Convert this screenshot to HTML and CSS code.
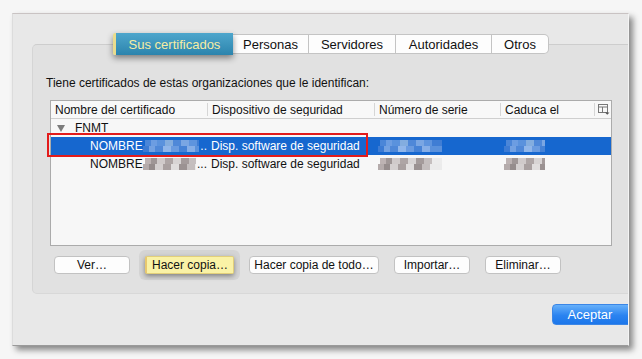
FILE: index.html
```html
<!DOCTYPE html>
<html lang="es">
<head>
<meta charset="utf-8">
<title>Administrador de certificados</title>
<link rel="stylesheet" href="styles.css">
</head>
<body>
<div class="window">
  <div class="tabs">
    <div class="tab active">Sus certificados</div>
    <div class="tab t-personas">Personas</div>
    <div class="tab t-servidores">Servidores</div>
    <div class="tab t-autoridades">Autoridades</div>
    <div class="tab t-otros last">Otros</div>
  </div>
  <div class="group">
    <p class="label">Tiene certificados de estas organizaciones que le identifican:</p>
    <div class="table">
      <div class="row head">
        <div class="cell c1">Nombre del certificado</div>
        <div class="cell sep">Dispositivo de seguridad</div>
        <div class="cell sep">Número de serie</div>
        <div class="cell sep">Caduca el</div>
        <div class="cell sep icon">
          <svg width="12" height="11" viewBox="0 0 12 11">
            <rect x="0.5" y="0.5" width="9" height="8" fill="none" stroke="#777" stroke-width="1"/>
            <line x1="0.5" y1="3" x2="9.5" y2="3" stroke="#777"/>
            <line x1="4.5" y1="3" x2="4.5" y2="8.5" stroke="#777"/>
            <path d="M7 8.5 L11.5 8.5 L9.25 10.8 Z" fill="#555"/>
          </svg>
        </div>
      </div>
      <div class="row org">
        <div class="cell c1"><span class="tri"></span>FNMT</div>
      </div>
      <div class="row cert selected">
        <div class="cell c1 name">NOMBRE<span class="blur b-name"></span>..</div>
        <div class="cell dev">Disp. software de seguridad</div>
        <div class="cell"><span class="blur b-serial"></span></div>
        <div class="cell"><span class="blur b-date"></span></div>
      </div>
      <div class="row cert">
        <div class="cell c1 name">NOMBRE<span class="blur b-name"></span>...</div>
        <div class="cell dev">Disp. software de seguridad</div>
        <div class="cell"><span class="blur b-serial"></span></div>
        <div class="cell"><span class="blur b-date"></span></div>
      </div>
      <div class="mark"></div>
    </div>
    <div class="buttons">
      <button class="btn w-ver">Ver…</button>
      <button class="btn hl w-copia">Hacer copia…</button>
      <button class="btn w-todo">Hacer copia de todo…</button>
      <button class="btn w-imp">Importar…</button>
      <button class="btn w-elim">Eliminar…</button>
    </div>
  </div>
  <div class="footer">
    <button class="ok">Aceptar</button>
  </div>
</div>
</body>
</html>
```
FILE: styles.css
```css
* { box-sizing: border-box; }
html, body { margin: 0; padding: 0; }
body {
  background: #f6f6f6;
  font-family: "Liberation Sans", Arial, Helvetica, sans-serif;
  width: 642px;
  height: 359px;
  overflow: hidden;
}
.window {
  margin: 13px 0 0 12px;
  width: 617px;
  height: 333px;
  background: #e8e8e8;
  border-top: 1px solid #c9c3c3;
  border-left: 1px solid #dcdcdc;
  border-right: 1px solid #f4f4f4;
  border-bottom: 1px solid #9a9a9a;
  box-shadow: 4px 4px 6px rgba(0,0,0,0.45);
  overflow: hidden;
  display: flex;
  flex-direction: column;
}
.tabs {
  display: flex;
  margin: 20px 0 0 100px;
  height: 20px;
  position: relative;
  z-index: 2;
}
.tab {
  height: 20px;
  background: #fdfdfd;
  border: 1px solid #c4c4c4;
  border-left: none;
  font-size: 13px;
  color: #111;
  display: flex;
  align-items: center;
  justify-content: center;
}
.tab.last { border-radius: 0 5px 5px 0; }
.tab.active {
  width: 120px;
  height: 22px;
  margin-top: -1px;
  border: none;
  border-left: 3px solid #e9dc8e;
  background: linear-gradient(#4ea6cc, #2c84ad);
  color: #f6eda4;
  box-shadow: 0 3px 6px rgba(0,0,0,0.45);
  border-radius: 2px 0 0 2px;
  position: relative;
  z-index: 3;
}
.t-personas { width: 76px; }
.t-servidores { width: 87px; }
.t-autoridades { width: 96px; }
.t-otros { width: 57px; }

.group {
  margin: -10px 0 0 19px;
  background: #e1e1e1;
  border-top: 1px solid #cdcdcd;
  border-left: 1px solid #d5d5d5;
  border-bottom: 1px solid #d8d8d8;
  border-radius: 5px 0 0 5px;
  padding: 31px 16px 19px 0;
}
.label {
  margin: 0 0 10px 13px;
  font-size: 12px;
  line-height: 14px;
  color: #111;
}
.table {
  margin-left: 17px;
  height: 146px;
  background: #f7f7f7;
  border: 1px solid #ababab;
  position: relative;
}
.row {
  display: grid;
  grid-template-columns: 156px 167px 126px 94px 1fr;
  height: 18px;
  font-size: 12px;
  color: #111;
}
.row.head {
  height: 18px;
  border-bottom: 1px solid #cfcfcf;
  background: #f8f8f8;
}
.cell {
  display: flex;
  align-items: center;
  white-space: nowrap;
  overflow: hidden;
  padding-left: 4px;
}
.head .cell.sep {
  border-left: 1px solid #d6d6d6;
  padding-left: 4px;
  margin: 2px 0;
}
.head .cell.icon { padding-left: 3px; }
.tri {
  width: 0;
  height: 0;
  border-left: 4px solid transparent;
  border-right: 4px solid transparent;
  border-top: 7px solid #7c7c7c;
  margin: 1px 10px 0 4px;
}
.row.org .c1 { padding-left: 2px; }
.name { padding-left: 39px; }
.dev { padding-left: 4px; }
.row.selected { background: #1667cf; color: #fff; }

.blur {
  display: inline-block;
  height: 12px;
  background-repeat: no-repeat;
  background-size: 100% 50%;
}
.b-name { width: 59px; margin-right: 1px; }
.b-serial { width: 64px; }
.b-date { width: 41px; }
.selected .blur {
  background-image:
    linear-gradient(90deg, #1667cf 0 2px, #4b86d8 2px 8px, #6c9de2 8px 14px, #5a92dd 14px 22px, #83addf 22px 30px, #4f88d8 30px 38px, #7aa6e3 38px 46px, #5e94de 46px 54px, #3f7dd4 54px 100%),
    linear-gradient(90deg, #3c7bd4 0 6px, #73a1e2 6px 12px, #4f88d8 12px 20px, #90b6ea 20px 28px, #6a9be0 28px 36px, #4682d6 36px 44px, #86aee7 44px 52px, #5a91dc 52px 100%);
  background-position: top, bottom;
}
.row.cert:not(.selected) .blur {
  background-image:
    linear-gradient(90deg, #f7f7f7 0 2px, #bdb3b3 2px 8px, #9f9696 8px 14px, #d0caca 14px 22px, #aea5a5 22px 30px, #d8d4d4 30px 38px, #a49b9b 38px 46px, #c5bfbf 46px 54px, #ececec 54px 100%),
    linear-gradient(90deg, #b4abab 0 6px, #958c8c 6px 12px, #d4cfcf 12px 20px, #a9a0a0 20px 28px, #e0dddd 28px 36px, #9b9292 36px 44px, #c4bebe 44px 52px, #ebebeb 52px 100%);
  background-position: top, bottom;
}
.mark {
  position: absolute;
  left: -4px;
  top: 32px;
  width: 321px;
  height: 24px;
  border: 2px solid #e31b1b;
}

.buttons {
  display: flex;
  margin: 10px 0 0 21px;
}
.btn {
  height: 18px;
  font-family: inherit;
  font-size: 12px;
  color: #111;
  background: #fdfdfd;
  border: 1px solid #c2c2c2;
  border-radius: 4px;
  padding: 0;
  margin-right: 15px;
}
.btn.hl {
  background: #faf2a6;
  border: 1px solid #e2cf7a;
  border-left: 2px solid #e8c86e;
  box-shadow: 0 2px 5px rgba(0,0,0,0.4), 0 0 0 6px rgba(190,190,190,0.35);
  border-radius: 2px;
}
.w-ver { width: 76px; }
.w-copia { width: 89px; }
.w-todo { width: 130px; }
.w-imp { width: 76px; }
.w-elim { width: 76px; }

.footer {
  display: flex;
  padding: 10px 0 0 539px;
}
.ok {
  flex: none;
  width: 86px;
  height: 21px;
  border: 1px solid #3b86e6;
  border-radius: 4px;
  background: linear-gradient(#66b0fa, #2a83f0 55%, #1c76ea);
  color: #fff;
  font-family: inherit;
  font-size: 13px;
  padding: 0 10px 0 0;
}
```
